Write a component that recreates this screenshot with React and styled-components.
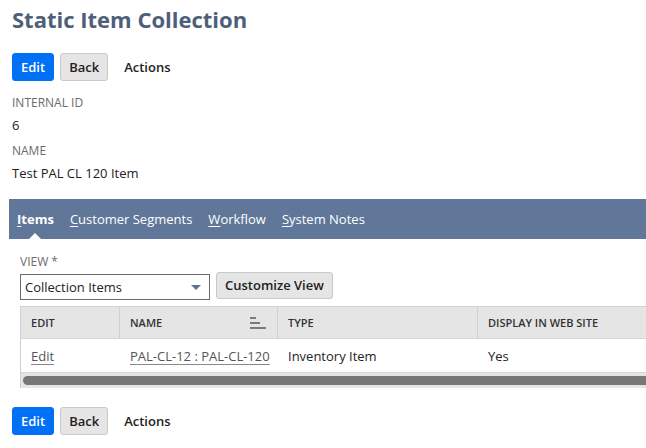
import React from "react";
import styled, { createGlobalStyle } from "styled-components";

const Global = createGlobalStyle`
  html, body { margin: 0; padding: 0; background: #fff; }
  body { font-family: "Open Sans", "Liberation Sans", sans-serif; color: #222; overflow: hidden; width: 646px; }
`;

const Page = styled.div`
  width: 646px;
  height: 448px;
  overflow: hidden;
`;

const Header = styled.div`
  padding: 0 0 0 12px;
`;

const Title = styled.h1`
  margin: 0;
  padding-top: 4px;
  font-size: 22px;
  line-height: 30px;
  font-weight: 700;
  color: #4d5f79;
`;

const ButtonBar = styled.div`
  display: flex;
  align-items: center;
  gap: 6px;
  margin-top: ${(p) => p.$top}px;
  padding-left: ${(p) => p.$left || 0}px;
`;

const Button = styled.button`
  height: 28px;
  box-sizing: border-box;
  padding: 0 8px;
  border-radius: 3px;
  border: 1px solid ${(p) => (p.$primary ? "#0070f5" : "#c8c8c8")};
  background: ${(p) => (p.$primary ? "#0070f5" : "#e5e5e5")};
  color: ${(p) => (p.$primary ? "#fff" : "#222")};
  font-family: "Open Sans", "Liberation Sans", sans-serif;
  font-size: 13px;
  font-weight: 600;
  line-height: 26px;
  cursor: pointer;
`;

const MenuText = styled.span`
  margin-left: 10px;
  font-size: 13px;
  font-weight: 600;
  color: #222;
`;

const Fields = styled.div`
  display: flex;
  flex-direction: column;
  margin-top: 11px;
`;

const Label = styled.div`
  font-size: 12px;
  line-height: 22px;
  color: #6b6b6b;
  text-transform: uppercase;
`;

const Value = styled.div`
  font-size: 13px;
  line-height: 22px;
  color: #222;
  margin-bottom: ${(p) => p.$mb || 0}px;
`;

const TabBar = styled.div`
  margin-top: 15px;
  margin-left: 9px;
  height: 40px;
  background: #607799;
  display: flex;
  align-items: center;
  gap: 16px;
  padding-left: 8px;
  width: 700px;
`;

const Tab = styled.span`
  position: relative;
  color: #fff;
  font-size: 13px;
  font-weight: ${(p) => (p.$active ? 700 : 400)};
  line-height: 40px;
  white-space: nowrap;
  &::after {
    content: "";
    display: ${(p) => (p.$active ? "block" : "none")};
    position: absolute;
    left: 50%;
    bottom: 0;
    transform: translateX(-50%);
    border-left: 6px solid transparent;
    border-right: 6px solid transparent;
    border-bottom: 6px solid #fff;
  }
`;

const Key = styled.u`
  text-underline-offset: 2px;
`;

const SubList = styled.div`
  padding-left: 20px;
  padding-top: 14px;
`;

const ViewLabel = styled.div`
  font-size: 12px;
  line-height: 18px;
  color: #6b6b6b;
`;

const ViewRow = styled.div`
  display: flex;
  align-items: flex-end;
  gap: 6px;
  margin-top: 1px;
`;

const Select = styled.div`
  width: 190px;
  height: 26px;
  box-sizing: border-box;
  border: 1px solid #6a6a6a;
  display: flex;
  align-items: center;
  justify-content: space-between;
  padding: 0 8px 0 4px;
  font-size: 13px;
  color: #222;
  margin-bottom: -1px;
`;

const Caret = styled.span`
  width: 0;
  height: 0;
  border-left: 5px solid transparent;
  border-right: 5px solid transparent;
  border-top: 5px solid #5f7494;
`;

const SmallButton = styled(Button)`
  height: 27px;
  line-height: 25px;
  padding: 0 8px;
`;

const Table = styled.div`
  margin-top: 7px;
  width: 720px;
  border-left: 1px solid #d0d0d0;
`;

const Row = styled.div`
  display: grid;
  grid-template-columns: 99px 158px 200px 1fr;
  height: ${(p) => (p.$head ? 33 : 34)}px;
  box-sizing: border-box;
  background: ${(p) => (p.$head ? "#e5e5e5" : "#fff")};
  border-top: ${(p) => (p.$head ? "1px solid #d0d0d0" : "none")};
  border-bottom: 1px solid #d6d6d6;
`;

const Cell = styled.div`
  display: flex;
  align-items: center;
  justify-content: space-between;
  padding: 0 10px;
  font-size: ${(p) => (p.$head ? 11 : 13)}px;
  font-weight: ${(p) => (p.$head ? 600 : 400)};
  color: ${(p) => (p.$head ? "#333" : "#222")};
  text-transform: ${(p) => (p.$head ? "uppercase" : "none")};
  border-right: ${(p) => (p.$head ? "1px solid #d0d0d0" : "none")};
  white-space: nowrap;
`;

const Link = styled.a`
  color: #555;
  text-decoration: underline;
  text-decoration-color: #888;
  text-underline-offset: 3px;
`;

const ScrollTrack = styled.div`
  height: 15px;
  background: #e5e5e5;
  display: flex;
  align-items: center;
  padding: 0 2px;
  box-sizing: border-box;
`;

const ScrollThumb = styled.div`
  height: 9px;
  flex: 1;
  border-radius: 5px;
  background: #777;
`;

const SortIcon = () => (
  <svg width="17" height="12" viewBox="0 0 17 12">
    <rect x="0" y="0" width="6" height="2" fill="#7a7a7a" />
    <rect x="0" y="5" width="10" height="2" fill="#7a7a7a" />
    <rect x="0" y="10" width="16" height="2" fill="#7a7a7a" />
  </svg>
);

export default function App() {
  return (
    <Page>
      <Global />
      <Header>
        <Title>Static Item Collection</Title>
        <ButtonBar $top={19}>
          <Button $primary>Edit</Button>
          <Button>Back</Button>
          <MenuText>Actions</MenuText>
        </ButtonBar>
        <Fields>
          <Label>Internal ID</Label>
          <Value $mb={4}>6</Value>
          <Label>Name</Label>
          <Value>Test PAL CL 120 Item</Value>
        </Fields>
      </Header>
      <TabBar>
        <Tab $active>
          <Key>I</Key>tems
        </Tab>
        <Tab>
          <Key>C</Key>ustomer Segments
        </Tab>
        <Tab>
          <Key>W</Key>orkflow
        </Tab>
        <Tab>
          <Key>S</Key>ystem Notes
        </Tab>
      </TabBar>
      <SubList>
        <ViewLabel>VIEW *</ViewLabel>
        <ViewRow>
          <Select>
            <span>Collection Items</span>
            <Caret />
          </Select>
          <SmallButton>Customize View</SmallButton>
        </ViewRow>
        <Table>
          <Row $head>
            <Cell $head>Edit</Cell>
            <Cell $head>
              Name
              <SortIcon />
            </Cell>
            <Cell $head>Type</Cell>
            <Cell $head>Display in Web Site</Cell>
          </Row>
          <Row>
            <Cell>
              <Link>Edit</Link>
            </Cell>
            <Cell>
              <Link>PAL-CL-12 : PAL-CL-120</Link>
            </Cell>
            <Cell>Inventory Item</Cell>
            <Cell>Yes</Cell>
          </Row>
          <ScrollTrack>
            <ScrollThumb />
          </ScrollTrack>
        </Table>
      </SubList>
      <ButtonBar $top={19} $left={12}>
        <Button $primary>Edit</Button>
        <Button>Back</Button>
        <MenuText>Actions</MenuText>
      </ButtonBar>
    </Page>
  );
}
